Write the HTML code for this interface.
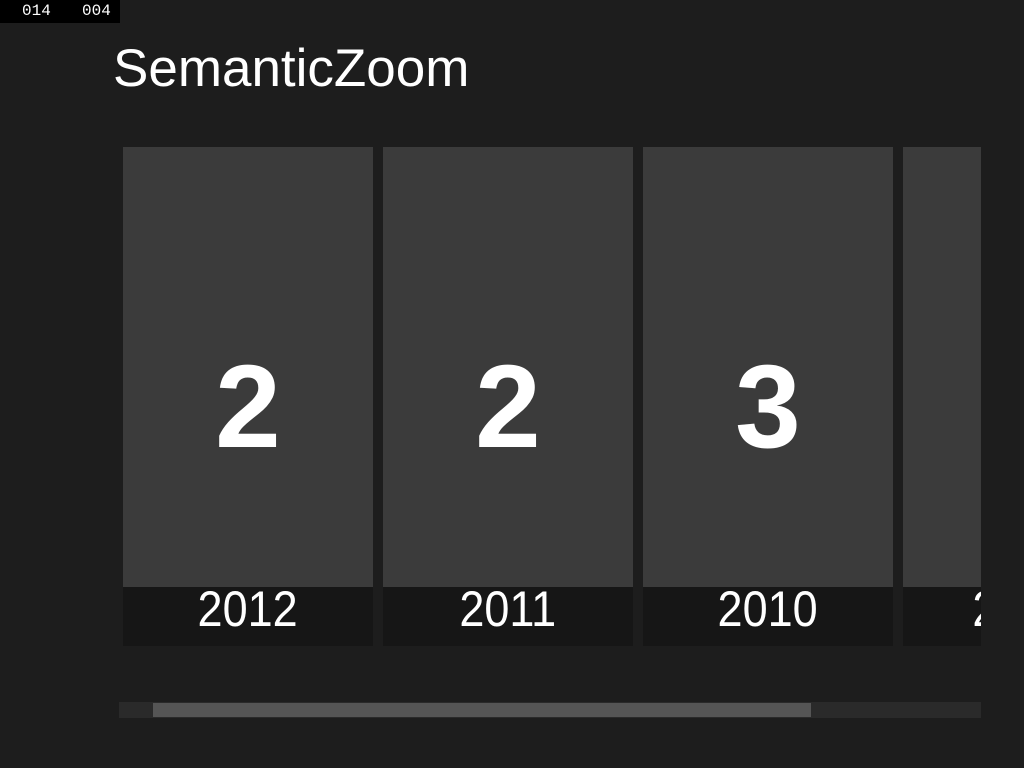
<!DOCTYPE html><html><head><style>
body{margin:0;width:1024px;height:768px;background:#1d1d1d;overflow:hidden;position:relative;font-family:"Liberation Sans",sans-serif;color:#fff}
.dbg{position:absolute;left:0;top:0;width:120px;height:23px;background:#000;font:16px "Liberation Mono",monospace;color:#fff}
.dbg span{position:absolute;top:2px}
h1{position:absolute;left:113px;top:38px;margin:0;font-weight:300;font-size:53px;letter-spacing:0px}
.clip{position:absolute;left:123px;top:147px;width:858px;height:500px;overflow:hidden}
.t{position:absolute;top:0;width:250px;height:499px;background:#3b3b3b}
.t b{position:absolute;left:0;right:0;top:195px;text-align:center;font-size:118px;font-weight:bold;line-height:130px}
.t i{position:absolute;left:0;right:0;bottom:0;height:59px;background:#161616;font-style:normal;text-align:center;font-size:50px;font-weight:300;line-height:44px}
.t i span{display:inline-block;transform:scaleX(0.9)}
.sb{position:absolute;left:119px;top:702px;width:862px;height:16px;background:#2a2a2a}
.th{position:absolute;left:34px;top:1px;width:658px;height:14px;background:#555}
</style></head><body>
<div class="dbg"><span style="left:22px">014</span><span style="left:82px">004</span></div>
<h1>SemanticZoom</h1>
<div class="clip">
<div class="t" style="left:0"><b>2</b><i><span>2012</span></i></div>
<div class="t" style="left:260px"><b>2</b><i><span>2011</span></i></div>
<div class="t" style="left:520px"><b>3</b><i><span>2010</span></i></div>
<div class="t" style="left:780px"><i style="text-align:left;padding-left:68px"><span>2</span></i></div>
</div>
<div class="sb"><div class="th"></div></div>
</body></html>
